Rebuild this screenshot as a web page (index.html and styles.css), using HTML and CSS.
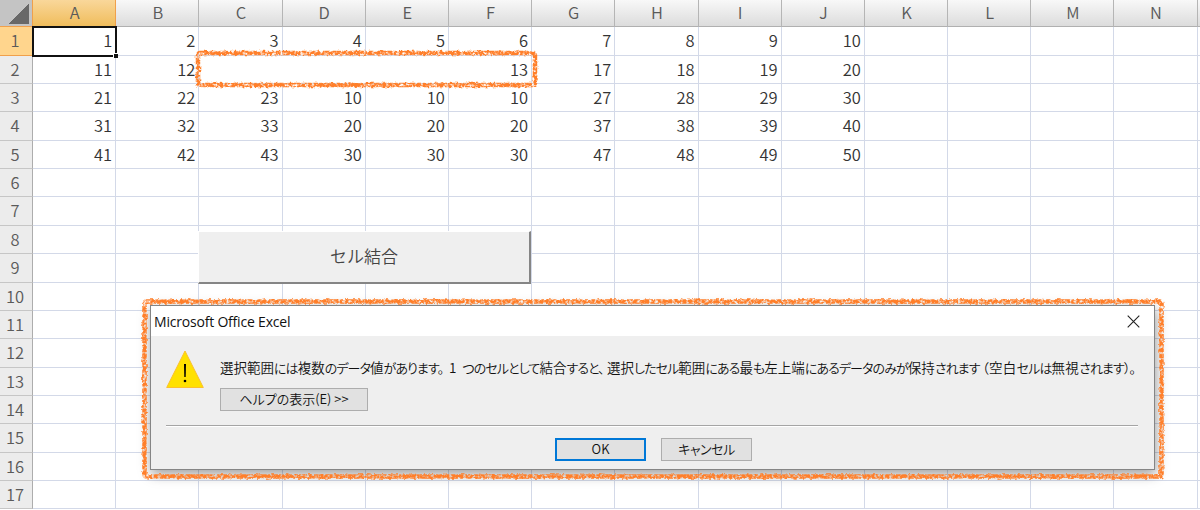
FILE: index.html
```
<!DOCTYPE html>
<html lang="ja">
<head>
    <meta charset="UTF-8">
    <meta name="viewport" content="width=device-width, initial-scale=1.0">
    <title>セル結合</title>
    <link rel="stylesheet" href="styles.css">
</head>
<body>
    <div class="sheet" id="sheet"></div>

    <svg class="mark mark-cell" width="350" height="44">
        <rect class="mark-line" x="6" y="6" width="337" height="32" rx="2"/>
    </svg>

    <button type="button" class="macro-button">セル結合</button>

    <div class="dialog">
        <div class="dialog-title">
            <span class="title-text">Microsoft Office Excel</span>
            <svg class="close" width="13" height="13" viewBox="0 0 13 13">
                <path d="M0.7 0.7 L12.3 12.3 M12.3 0.7 L0.7 12.3"/>
            </svg>
        </div>
        <div class="dialog-body">
            <div class="message">
                <svg class="warning" width="40" height="40" viewBox="0 0 40 40">
                    <path class="warning-shape" d="M20 2 L38.3 38.5 H1.7 Z"/>
                    <path class="warning-bar" d="M19 15 h2 l-0.3 13 h-1.4 Z"/>
                    <circle cx="20" cy="32" r="1.3"/>
                </svg>
                <div class="message-content">
                    <p><span>選択範囲<i>には</i>複数<i>のデータ</i>値<i>があります。</i></span><span class="count">1 <i>つのセルとして</i>結合<i>すると、</i></span><span>選択<i>したセル</i>範囲<i>にある</i>最<i>も</i>左上端<i>にあるデータのみが</i>保持<i>されます</i></span><span>（空白<i>セルは</i>無視<i>されます）。</i></span></p>
                    <button type="button" class="btn btn-help">ヘルプの表示(E) &gt;&gt;</button>
                </div>
            </div>
            <div class="actions">
                <button type="button" class="btn btn-ok">OK</button>
                <button type="button" class="btn">キャンセル</button>
            </div>
        </div>
    </div>

    <svg class="mark mark-dialog" width="1030" height="190">
        <defs>
            <filter id="crayon" x="0" y="0" width="1030" height="190" filterUnits="userSpaceOnUse">
                <feTurbulence type="fractalNoise" baseFrequency="0.35" numOctaves="2" seed="4" result="noise"/>
                <feDisplacementMap in="SourceGraphic" in2="noise" scale="4" xChannelSelector="R" yChannelSelector="G" result="rough"/>
                <feColorMatrix in="noise" values="0 0 0 0 0  0 0 0 0 0  0 0 0 0 0  0 0 3 0 -0.6" result="grain"/>
                <feComposite in="rough" in2="grain" operator="in"/>
                <feGaussianBlur stdDeviation="0.4"/>
            </filter>
        </defs>
        <rect class="mark-line" x="6.5" y="6.5" width="1017" height="175" rx="2"/>
    </svg>

    <script>
        const columns = "ABCDEFGHIJKLMN".split("");
        const data = [
            [1, 2, 3, 4, 5, 6, 7, 8, 9, 10],
            [11, 12, 13, 17, 18, 19, 20],
            [21, 22, 23, 10, 10, 10, 27, 28, 29, 30],
            [31, 32, 33, 20, 20, 20, 37, 38, 39, 40],
            [41, 42, 43, 30, 30, 30, 47, 48, 49, 50]
        ];
        const sheet = document.getElementById("sheet");

        function addCell(className, text) {
            const cell = document.createElement("div");
            cell.className = className;
            cell.textContent = text;
            sheet.appendChild(cell);
        }

        addCell("corner", "");
        columns.forEach((name, i) => addCell(i === 0 ? "col-head active" : "col-head", name));
        addCell("col-head", "");

        for (let row = 1; row <= 17; row++) {
            const values = data[row - 1] || [];
            // C2:F2 is merged, so row 2 has three cells less
            const count = row === 2 ? 12 : 15;
            addCell(row === 1 ? "row-head active" : "row-head", row);
            for (let i = 0; i < count; i++) {
                let className = "cell";
                if (row === 1 && i === 0) className += " selected";
                if (row === 2 && i === 2) className += " merged";
                addCell(className, values[i] === undefined ? "" : values[i]);
            }
        }
    </script>
</body>
</html>
```
FILE: styles.css
```
body {
    margin: 0;
    position: relative;
    width: 1200px;
    height: 510px;
    overflow: hidden;
    background: white;
    font-family: "Noto Sans CJK JP", sans-serif;
    color: #333;
}
.sheet {
    display: grid;
    grid-template-columns: 33px repeat(14, 83.2px) 3px;
    grid-template-rows: 27.3px repeat(17, 28.37px);
    width: 1200px;
    overflow: hidden;
    font-size: 16.5px;
    font-weight: 350;
}
.sheet > div {
    box-sizing: border-box;
    min-width: 0;
    overflow: hidden;
}
.cell {
    border-right: 1px solid #d3d9e8;
    border-bottom: 1px solid #d3d9e8;
    padding-right: 3px;
    line-height: 27px;
    text-align: right;
}
.col-head {
    background: linear-gradient(#f8f8f8, #dcdcdc);
    border-right: 1px solid #b5b5b5;
    border-bottom: 1px solid #b0b0b0;
    padding-left: 1px;
    line-height: 24px;
    text-align: center;
    color: #5a5a5a;
}
.row-head {
    background: #ececec;
    border-right: 1px solid #adadad;
    border-bottom: 1px solid #c6c6c6;
    padding-right: 2px;
    line-height: 27px;
    text-align: center;
    color: #5a5a5a;
}
.col-head.active {
    background: linear-gradient(#f9d79a, #f0bd5c);
    border-color: #f0a04b;
}
.row-head.active {
    background: #ffd58d;
    border-color: #f0a04b;
}
.corner {
    background: linear-gradient(135deg, transparent 50%, #686868 50%) 9px 4px / 20px 20px no-repeat #c4c4c4;
    border-right: 1px solid #f0a04b;
    border-bottom: 1px solid #f0a04b;
}
.merged {
    grid-column: span 4;
    line-height: 26px;
}
.sheet > .selected {
    position: relative;
    overflow: visible;
    border: 0;
    padding-right: 4px;
    box-shadow: inset 0 0 0 1px #111, 0 0 0 1px #111;
}
.selected::after {
    content: "";
    position: absolute;
    right: -2px;
    bottom: -2px;
    width: 4px;
    height: 4px;
    background: #111;
    border: 1px solid white;
    border-width: 1px 0 0 1px;
}
.mark {
    position: absolute;
    pointer-events: none;
}
.mark-cell {
    left: 192px;
    top: 47px;
}
.mark-dialog {
    left: 138px;
    top: 295px;
}
.mark-line {
    fill: none;
    stroke: #ff7f2a;
    stroke-width: 4.5;
    filter: url(#crayon);
}
.macro-button {
    position: absolute;
    left: 198px;
    top: 231px;
    width: 333px;
    height: 53px;
    padding: 0 0 3px;
    border: 1px solid white;
    border-right: 2px solid #858585;
    border-bottom: 2px solid #858585;
    background: #efefef;
    font: 350 17px "Noto Sans CJK JP", sans-serif;
    color: #444;
}
.dialog {
    position: absolute;
    left: 150px;
    top: 305px;
    width: 1005px;
    height: 165px;
    box-sizing: border-box;
    border: 1px solid #858585;
    background: #efefef;
    box-shadow: 1px 4px 12px rgba(0, 0, 0, 0.4);
    color: #111;
    font-size: 13.5px;
    font-weight: 350;
    font-feature-settings: "palt";
}
.dialog-title {
    display: flex;
    justify-content: space-between;
    align-items: center;
    height: 30px;
    padding: 0 14px 0 3px;
    background: white;
}
.title-text {
    font: 14px "Open Sans", sans-serif;
    letter-spacing: -0.2px;
}
.close {
    fill: none;
    stroke: #222;
    stroke-width: 1.1;
}
.dialog-body {
    padding: 12px 16px 0 14px;
}
.message {
    display: flex;
    gap: 15px;
    height: 77px;
    margin-left: 1px;
    border-bottom: 1px solid #a5a5a5;
    box-shadow: 0 1px white;
}
.warning {
    flex-shrink: 0;
    margin: 1px 0 0 -1px;
}
.warning-shape {
    fill: #ffe100;
    stroke: #fbc02d;
}
.message-content p {
    display: flex;
    margin: 8px 0 9px;
    line-height: 22px;
    white-space: nowrap;
}
.message-content i {
    font-style: normal;
    font-size: 13px;
    letter-spacing: -0.9px;
}
.message-content span:nth-child(1) {
    width: 229px;
}
.message-content span:nth-child(2) {
    width: 158px;
}
.message-content span:nth-child(3) {
    width: 375px;
}
.message-content span:nth-child(4) {
    letter-spacing: 0.3px;
}
.count {
    word-spacing: 3px;
}
.btn {
    width: 91px;
    height: 23px;
    padding: 0 0 2px;
    border: 1px solid #adadad;
    background: #e1e1e1;
    color: #111;
    font: 350 13px "Noto Sans CJK JP", sans-serif;
    font-feature-settings: "palt";
    letter-spacing: -0.5px;
    line-height: 19px;
}
.btn-help {
    display: block;
    width: 148px;
    letter-spacing: 0;
}
.btn-ok {
    border: 2px solid #0078d7;
    line-height: 17px;
    letter-spacing: 0;
}
.actions {
    display: flex;
    justify-content: center;
    gap: 15px;
    padding: 12px 0 0 4px;
}
```
